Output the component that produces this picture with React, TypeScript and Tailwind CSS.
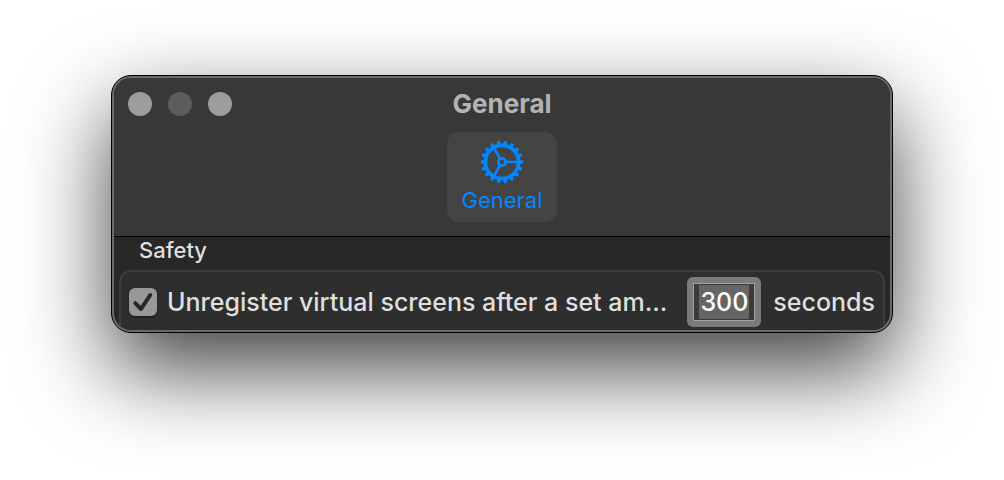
import { useState } from "react";

const TEETH = Array.from({ length: 18 }, (_, i) => i * 20);
const SPOKES = [0, 120, 240];

function GearIcon() {
  return (
    <svg viewBox="-22 -22 44 44" className="size-11" fill="none" stroke="currentColor" aria-hidden="true">
      <circle r="16.6" strokeWidth="3.6" />
      <circle r="3.7" strokeWidth="2.7" />
      {TEETH.map((angle) => (
        <path key={angle} d="M17.5 -2.2L21 -1.3Q21.9 0 21 1.3L17.5 2.2Z" fill="currentColor" stroke="none" transform={`rotate(${angle})`} />
      ))}
      {SPOKES.map((angle) => (
        <path key={angle} d="M4.5 0H16" strokeWidth="2.7" transform={`rotate(${angle})`} />
      ))}
    </svg>
  );
}

export default function App() {
  const [enabled, setEnabled] = useState(true);
  const [seconds, setSeconds] = useState("300");

  return (
    <div className="min-h-screen overflow-hidden bg-white px-6 pt-[75px] pb-[147px] font-['Inter','Liberation_Sans',sans-serif]">
      <main className="mx-auto w-full max-w-[782px] rounded-[20px] border border-black bg-[#6a6a6a] p-0.5 shadow-[0_36px_88px_rgba(0,0,0,0.75)]">
        <div className="overflow-hidden rounded-[17px] bg-[#282828]">
          <header className="border-b border-black bg-[#383838] px-3.5 pb-3.5">
            <div className="grid h-[54px] grid-cols-[1fr_auto_1fr] items-start pt-[14px]">
              <div className="flex gap-4">
                <button type="button" aria-label="Close" className="size-6 rounded-full bg-[#9d9d9d]" />
                <button type="button" aria-label="Minimize" disabled className="size-6 rounded-full bg-[#5c5c5c]" />
                <button type="button" aria-label="Zoom" className="size-6 rounded-full bg-[#9d9d9d]" />
              </div>
              <h1 className="text-[26px] leading-6 font-bold text-[#b3b3b3]">General</h1>
            </div>
            <nav className="flex justify-center">
              <button
                type="button"
                aria-current="page"
                className="flex h-[90px] w-[110px] flex-col items-center rounded-xl bg-[#444444] pt-2 text-[#0387ff]"
              >
                <GearIcon />
                <span className="text-[22px] leading-8">General</span>
              </button>
            </nav>
          </header>
          <section>
            <h2 className="px-[25px] pb-1.5 text-[22px] leading-[27px] font-medium text-[#dfdfdf]">Safety</h2>
            <div className="mx-[5px] flex h-[60px] items-center rounded-t-xl border-x-2 border-t-2 border-[#3c3c3c] bg-[#2e2e2e] px-2 pt-0.5">
              <label className="flex min-w-0 flex-1 items-center gap-2.5">
                <span className="grid shrink-0">
                  <input
                    type="checkbox"
                    checked={enabled}
                    onChange={(e) => setEnabled(e.target.checked)}
                    className="peer col-start-1 row-start-1 size-7 appearance-none rounded-md bg-[#989898] shadow-[0_1px_2px_rgba(0,0,0,0.5)]"
                  />
                  <svg
                    viewBox="0 0 28 28"
                    className="pointer-events-none invisible col-start-1 row-start-1 size-7 peer-checked:visible"
                    fill="none"
                    stroke="#282828"
                    strokeWidth="4"
                    strokeLinecap="round"
                    strokeLinejoin="round"
                    aria-hidden="true"
                  >
                    <path d="M6.3 15.2L12 21L21.2 7" />
                  </svg>
                </span>
                <span className="truncate text-[25px] leading-8 font-medium text-[#dfdfdf]">
                  Unregister virtual screens after a set am...
                </span>
              </label>
              <div className="ml-3 rounded-md bg-[#7b7b7b] p-1.5">
                <div className="border border-[#a3a3a3] bg-[#3a3a3a] px-[5px] py-px">
                  <input
                    id="delay"
                    aria-label="Delay in seconds"
                    type="text"
                    inputMode="numeric"
                    value={seconds}
                    onChange={(e) => setSeconds(e.target.value)}
                    className="block h-[34px] w-[50px] bg-[#656565] text-center text-[25px] leading-8 font-medium text-white outline-none"
                  />
                </div>
              </div>
              <label htmlFor="delay" className="ml-3 text-[25px] leading-8 font-medium text-[#dfdfdf]">
                seconds
              </label>
            </div>
          </section>
        </div>
      </main>
    </div>
  );
}
